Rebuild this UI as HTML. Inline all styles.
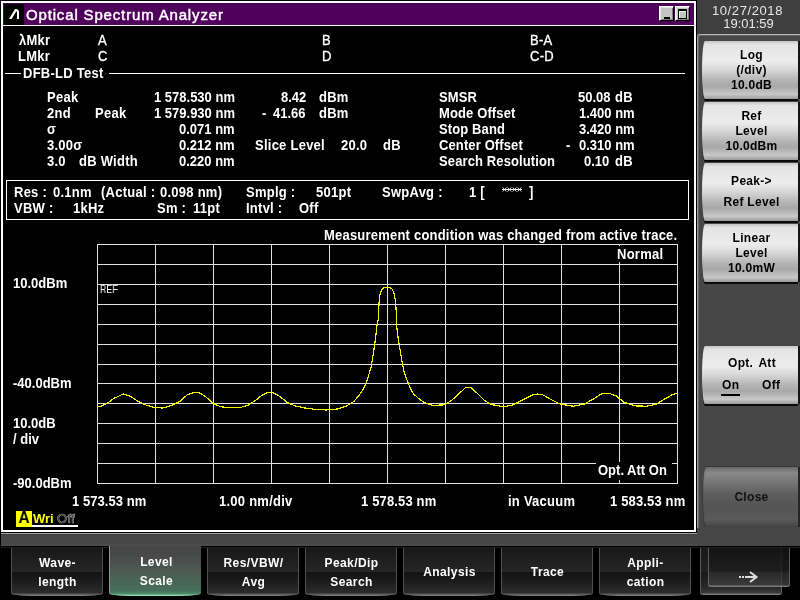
<!DOCTYPE html>
<html><head><meta charset="utf-8">
<style>
*{margin:0;padding:0;box-sizing:border-box}
html,body{width:800px;height:600px;overflow:hidden;background:#000}
body{position:relative;font-family:"Liberation Sans",sans-serif;color:#fff}
.t,.key,.fk,.a{will-change:transform}
.a{position:absolute}
.t{position:absolute;font-weight:bold;font-size:13px;line-height:13px;white-space:pre;color:#fff;transform:scaleY(1.1);transform-origin:0 11px;letter-spacing:0.25px}
.sk{position:absolute;font-weight:bold;font-size:12px;line-height:12px;white-space:pre;color:#000;text-align:center}

.key{position:absolute;left:702px;width:96px;height:58px;box-shadow:0 2px 0 #0a0a0a,2px 0 0 #151515;border-radius:3px 0 0 3px / 29px 0 0 29px;padding-left:3px;background:linear-gradient(to bottom,#c4c4c4 0,#e4e4e4 6%,#ececec 35%,#d6d6d6 50%,#b4b4b4 68%,#a8a8a8 78%,#c8c8c8 92%,#9a9a9a 100%);display:flex;align-items:center;justify-content:center;text-align:center;font-weight:bold;font-size:12px;line-height:15px;color:#000;letter-spacing:0.3px}
.key.k2 span{line-height:21px}
.key.close{box-shadow:inset 1px 0 1px #383838,0 -1px 0 #383838,2px 0 0 #262626;background:linear-gradient(to bottom,#6a6a6a 0,#8a8a8a 10%,#767676 25%,#5e5e5e 45%,#545454 65%,#5a5a5a 88%,#444 100%);color:#111}
.fk{position:absolute;top:548px;width:92px;height:48px;border-radius:0 0 20px 20px / 0 0 3px 3px;background:linear-gradient(to bottom,#181818 0,#262626 50%,#131313 51%,#1c1c1c 70%,#2c2c2c 93%,#8a8a8a 100%);box-shadow:inset 1px 0 0 #505050,inset -1px 0 0 #505050;display:flex;align-items:center;justify-content:center;text-align:center;font-weight:bold;font-size:12px;line-height:19px;color:#fff;letter-spacing:0.4px;padding-left:1px;padding-top:1px}
.fk.act{top:546px;height:50px;background:linear-gradient(to bottom,#474747 0,#474747 15%,#4c5a53 50%,#46705a 90%,#4a8a68 95%,#a0e8c0 100%);box-shadow:inset 1px 0 0 #8a9a90;padding-top:1px;padding-left:3px}
</style></head><body>
<!-- right panel background -->
<div class="a" style="left:697px;top:0;width:103px;height:546px;background:#3f3f3f"></div>
<!-- bottom gray bar -->
<div class="a" style="left:1px;top:533px;width:799px;height:13px;background:linear-gradient(to bottom,#383838 0,#474747 12%,#474747 80%,#4e4e4e 100%);border-top:1px solid #a4a4a4"></div>
<div class="a" style="left:1px;top:547px;width:799px;height:1px;background:#1e1e1e"></div>
<!-- window -->
<div class="a" style="left:1px;top:1px;width:695px;height:531px;border:2px solid #fff;background:#000"></div>
<!-- title bar -->
<div class="a" style="left:3px;top:3px;width:691px;height:22px;background:#4e005a"></div>
<div class="a" style="left:3px;top:25px;width:691px;height:1px;background:#fff"></div>
<div class="a" style="left:4px;top:4px;width:20px;height:21px;background:#000"></div>
<svg class="a" style="left:0;top:0" width="30" height="30"><path d="M9 19 L15 9 L17 9 L19 11 L19 19 L17 19 L17 12 L16.2 11.6 L11.6 19 Z" fill="#fff"/></svg>
<div class="a" style="left:26px;top:6px;font-size:15px;line-height:18px;white-space:pre;color:#fff;letter-spacing:0.84px;-webkit-text-stroke:0.45px #fff">Optical Spectrum Analyzer</div>
<!-- min/max -->
<div class="a" style="left:659px;top:6px;width:15px;height:15px;background:#c4c4c4;border-top:1px solid #fff;border-left:1px solid #fff;border-right:1px solid #000;border-bottom:1px solid #000;box-shadow:inset 1px 1px 0 #e4e4e4,inset -1px -1px 0 #808080"></div>
<div class="a" style="left:664px;top:17px;width:6px;height:2px;background:#000"></div>
<div class="a" style="left:675px;top:6px;width:15px;height:15px;background:#c4c4c4;border-top:1px solid #fff;border-left:1px solid #fff;border-right:1px solid #000;border-bottom:1px solid #000;box-shadow:inset 1px 1px 0 #e4e4e4,inset -1px -1px 0 #808080"></div>
<div class="a" style="left:678px;top:9px;width:9px;height:10px;border:1px solid #000;border-top-width:2px;background:#c4c4c4;box-shadow:inset 1px 1px 0 #f0f0f0"></div>

<!-- marker header -->
<div class="t" style="left:19px;top:34px">λMkr</div>
<div class="t" style="left:98px;top:34px;font-weight:normal;-webkit-text-stroke:0.3px #fff">A</div>
<div class="t" style="left:322px;top:34px;font-weight:normal;-webkit-text-stroke:0.3px #fff">B</div>
<div class="t" style="left:530px;top:34px;font-weight:normal;-webkit-text-stroke:0.3px #fff">B-A</div>
<div class="t" style="left:18px;top:50px">LMkr</div>
<div class="t" style="left:98px;top:50px;font-weight:normal;-webkit-text-stroke:0.3px #fff">C</div>
<div class="t" style="left:322px;top:50px;font-weight:normal;-webkit-text-stroke:0.3px #fff">D</div>
<div class="t" style="left:530px;top:50px;font-weight:normal;-webkit-text-stroke:0.3px #fff">C-D</div>
<div class="a" style="left:5px;top:73px;width:16px;height:1px;background:#fff"></div>
<div class="t" style="left:23px;top:67px">DFB-LD Test</div>
<div class="a" style="left:109px;top:73px;width:576px;height:1px;background:#fff"></div>

<!-- data -->
<div class="t" style="left:47px;top:91px">Peak</div>
<div class="t" style="left:47px;top:107px">2nd</div>
<div class="t" style="left:95px;top:107px">Peak</div>
<div class="t" style="left:47px;top:123px">σ</div>
<div class="t" style="left:47px;top:139px">3.00σ</div>
<div class="t" style="left:47px;top:155px">3.0</div>
<div class="t" style="left:79px;top:155px">dB Width</div>
<div class="t" style="right:565px;top:91px;letter-spacing:0">1 578.530 nm</div>
<div class="t" style="right:565px;top:107px;letter-spacing:0">1 579.930 nm</div>
<div class="t" style="right:565px;top:123px;letter-spacing:0">0.071 nm</div>
<div class="t" style="right:565px;top:139px;letter-spacing:0">0.212 nm</div>
<div class="t" style="right:565px;top:155px;letter-spacing:0">0.220 nm</div>
<div class="t" style="right:494px;top:91px;letter-spacing:0">8.42</div>
<div class="t" style="right:494px;top:107px;letter-spacing:0">41.66</div>
<div class="t" style="left:262px;top:107px">-</div>
<div class="t" style="left:319px;top:91px">dBm</div>
<div class="t" style="left:319px;top:107px">dBm</div>
<div class="t" style="left:255px;top:139px">Slice Level</div>
<div class="t" style="left:341px;top:139px">20.0</div>
<div class="t" style="left:383px;top:139px">dB</div>

<div class="t" style="left:439px;top:91px;letter-spacing:0.12px">SMSR</div>
<div class="t" style="left:439px;top:107px;letter-spacing:0.12px">Mode Offset</div>
<div class="t" style="left:439px;top:123px;letter-spacing:0.12px">Stop Band</div>
<div class="t" style="left:439px;top:139px;letter-spacing:0.12px">Center Offset</div>
<div class="t" style="left:439px;top:155px;letter-spacing:0.12px">Search Resolution</div>
<div class="t" style="right:189px;top:91px;letter-spacing:0">50.08</div>
<div class="t" style="left:615px;top:91px">dB</div>
<div class="t" style="right:165px;top:107px;letter-spacing:0">1.400 nm</div>
<div class="t" style="right:165px;top:123px;letter-spacing:0">3.420 nm</div>
<div class="t" style="left:566px;top:139px">-</div>
<div class="t" style="right:165px;top:139px;letter-spacing:0">0.310 nm</div>
<div class="t" style="right:191px;top:155px;letter-spacing:0">0.10</div>
<div class="t" style="left:615px;top:155px">dB</div>

<!-- res box -->
<div class="a" style="left:6px;top:180px;width:683px;height:40px;border:1px solid #fff"></div>
<div class="t" style="left:14px;top:186px">Res :</div>
<div class="t" style="left:53px;top:186px">0.1nm</div>
<div class="t" style="left:101px;top:186px">(Actual :</div>
<div class="t" style="left:160px;top:186px">0.098 nm)</div>
<div class="t" style="left:246px;top:186px">Smplg :</div>
<div class="t" style="left:316px;top:186px">501pt</div>
<div class="t" style="left:382px;top:186px">SwpAvg :</div>
<div class="t" style="left:469px;top:186px">1 [</div>
<svg class="a" style="left:500px;top:186px" width="26" height="8"><path d="M2.0 3.5H7.0M2.7 1.5L6.3 5.5M6.3 1.5L2.7 5.5M7.0 3.5H12.0M7.7 1.5L11.3 5.5M11.3 1.5L7.7 5.5M12.0 3.5H17.0M12.7 1.5L16.3 5.5M16.3 1.5L12.7 5.5M17.0 3.5H22.0M17.7 1.5L21.3 5.5M21.3 1.5L17.7 5.5" stroke="#fff" stroke-width="0.9" fill="none"/></svg>
<div class="t" style="left:529px;top:186px">]</div>
<div class="t" style="left:14px;top:202px">VBW :</div>
<div class="t" style="left:73px;top:202px">1kHz</div>
<div class="t" style="left:157px;top:202px">Sm :</div>
<div class="t" style="left:193px;top:202px">11pt</div>
<div class="t" style="left:246px;top:202px">Intvl :</div>
<div class="t" style="left:299px;top:202px">Off</div>

<!-- graph -->
<div class="t" style="left:324px;top:229px;letter-spacing:0.21px">Measurement condition was changed from active trace.</div>
<svg class="a" style="left:0;top:0" width="800" height="600" id="g">
<g fill="#e0e0e0" shape-rendering="crispEdges">
<rect x="97" y="244" width="581" height="1"/>
<rect x="97" y="264" width="581" height="1"/>
<rect x="97" y="284" width="581" height="1"/>
<rect x="97" y="304" width="581" height="1"/>
<rect x="97" y="324" width="581" height="1"/>
<rect x="97" y="344" width="581" height="1"/>
<rect x="97" y="364" width="581" height="1"/>
<rect x="97" y="383" width="581" height="1"/>
<rect x="97" y="403" width="581" height="1"/>
<rect x="97" y="423" width="581" height="1"/>
<rect x="97" y="443" width="581" height="1"/>
<rect x="97" y="463" width="581" height="1"/>
<rect x="97" y="483" width="581" height="1"/>
<rect x="97" y="244" width="1" height="240"/>
<rect x="155" y="244" width="1" height="240"/>
<rect x="213" y="244" width="1" height="240"/>
<rect x="271" y="244" width="1" height="240"/>
<rect x="329" y="244" width="1" height="240"/>
<rect x="387" y="244" width="1" height="240"/>
<rect x="445" y="244" width="1" height="240"/>
<rect x="503" y="244" width="1" height="240"/>
<rect x="561" y="244" width="1" height="240"/>
<rect x="619" y="244" width="1" height="240"/>
<rect x="677" y="244" width="1" height="240"/>
</g>
<rect x="612" y="246" width="60" height="16" fill="#000"/>
<rect x="596" y="462" width="76" height="18" fill="#000"/>
<polyline points="97.0,407.2 100.8,406.3 108.2,402.5 113.9,398.4 123.3,394.0 130.8,396.5 137.3,401.0 143.9,404.4 153.3,407.2 162.6,408.1 172.0,405.3 179.5,401.6 187.0,395.0 194.5,392.2 200.0,393.0 205.8,396.9 213.2,403.4 220.8,406.8 230.0,407.8 241.4,407.2 248.1,405.2 254.6,401.1 261.1,395.9 267.6,392.5 272.5,392.5 279.0,395.9 287.2,402.4 295.3,406.0 305.0,408.0 314.8,409.3 326.2,410.0 337.6,409.0 345.7,406.3 353.8,401.5 360.3,393.8 364.8,386.2 368.0,377.5 371.2,366.7 374.0,349.3 375.3,340.0 376.3,331.3 377.2,323.6 378.2,319.7 378.9,306.2 379.4,297.5 380.2,293.6 381.6,290.2 384.5,287.3 389.8,287.3 392.2,289.2 393.7,292.6 394.7,296.5 395.6,301.3 396.1,310.0 396.6,325.5 398.0,337.0 401.0,355.8 403.8,371.0 407.0,380.0 410.5,388.8 413.5,393.8 417.5,397.5 424.5,402.8 433.2,405.4 443.8,404.9 450.8,401.0 457.8,394.9 465.6,387.5 470.9,387.5 477.0,393.1 484.0,400.1 491.0,404.5 503.2,406.6 512.0,405.4 522.5,400.1 533.0,394.9 537.5,394.0 543.1,395.0 550.6,399.3 560.0,404.0 573.1,406.2 584.4,404.0 593.8,398.8 601.2,394.0 608.8,393.1 616.2,396.0 623.8,402.1 635.0,405.9 646.2,406.2 655.6,404.4 665.0,398.8 672.5,394.6 677.2,393.1" fill="none" stroke="#f4f400" stroke-width="1.2" stroke-linejoin="round" shape-rendering="crispEdges"/>
</svg>

<!-- axis labels -->
<div class="t" style="left:13px;top:277px;letter-spacing:0">10.0dBm</div>
<div class="t" style="left:13px;top:377px;letter-spacing:0">-40.0dBm</div>
<div class="t" style="left:13px;top:417px;letter-spacing:0">10.0dB</div>
<div class="t" style="left:13px;top:433px;letter-spacing:0">/ div</div>
<div class="t" style="left:13px;top:477px;letter-spacing:0">-90.0dBm</div>
<div class="t" style="left:72px;top:495px;letter-spacing:0.05px">1 573.53 nm</div>
<div class="t" style="left:219px;top:495px">1.00 nm/div</div>
<div class="t" style="left:361px;top:495px;letter-spacing:0.15px">1 578.53 nm</div>
<div class="t" style="left:508px;top:495px">in Vacuum</div>
<div class="t" style="left:610px;top:495px;letter-spacing:0.15px">1 583.53 nm</div>

<!-- right soft keys -->
<div class="a" style="left:696px;top:4px;width:103px;text-align:center;font-size:13px;line-height:13px;color:#e8e8e8;white-space:pre;letter-spacing:0.6px">10/27/2018</div>
<div class="a" style="left:697px;top:17px;width:103px;text-align:center;font-size:13px;line-height:13px;color:#e8e8e8;white-space:pre">19:01:59</div>


<!-- graph small labels -->
<div class="a" style="left:100px;top:285px;font-size:10px;line-height:10px;color:#fff;white-space:pre;transform:scaleX(0.88);transform-origin:0 0">REF</div>
<div class="t" style="left:617px;top:248px">Normal</div>
<div class="t" style="left:598px;top:464px;letter-spacing:0">Opt. Att On</div>
<div class="a" style="left:16px;top:511px;width:16px;height:16px;background:#ffff00"></div>
<div class="a" style="left:16px;top:510px;width:16px;font-size:16px;line-height:16px;font-weight:bold;color:#000;text-align:center;transform:scaleX(0.95)">A</div>
<div class="a" style="left:33px;top:511px;font-size:13px;line-height:16px;font-weight:bold;color:#ffff00">Wri</div>
<div class="a" style="left:57px;top:511px;font-size:13px;line-height:16px;color:#000;-webkit-text-stroke:0.7px #9a9a9a;letter-spacing:0.3px">Off</div>
<div class="a" style="left:32px;top:525px;width:46px;height:2px;background:#fff"></div>

<!-- right softkey panel -->
<div class="a" style="left:697px;top:34px;width:103px;height:512px;background:#474747;border-top:1px solid #b8b8b8;border-left:1px solid #9a9a9a;border-top-left-radius:3px;box-shadow:inset 1px 1px 0 #646464"></div>
<div class="a" style="left:697px;top:528px;width:103px;height:18px;background:#474747"></div>
<div class="key" style="top:41px"><span>Log<br>(/div)<br>10.0dB</span></div>
<div class="key" style="top:102px"><span>Ref<br>Level<br>10.0dBm</span></div>
<div class="key k2" style="top:163px"><span>Peak-&gt;<br>Ref Level</span></div>
<div class="key" style="top:224px"><span>Linear<br>Level<br>10.0mW</span></div>
<div class="key" style="top:346px"></div>
<div class="a" style="left:728px;top:357px;font-weight:bold;font-size:12px;line-height:12px;color:#000;letter-spacing:0.3px;word-spacing:2px;white-space:pre">Opt. Att</div>
<div class="a" style="left:722px;top:379px;font-weight:bold;font-size:12px;line-height:12px;color:#000;letter-spacing:0.3px">On</div>
<div class="a" style="left:762px;top:379px;font-weight:bold;font-size:12px;line-height:12px;color:#000;letter-spacing:0.3px">Off</div>
<div class="a" style="left:721px;top:394px;width:19px;height:2px;background:#000"></div>
<div class="key close" style="top:467px;height:60px"><span>Close</span></div>

<!-- bottom function keys -->
<div class="fk" style="left:11px"><span>Wave-<br>length</span></div>
<div class="fk act" style="left:109px"><span>Level<br>Scale</span></div>
<div class="fk" style="left:207px"><span>Res/VBW/<br>Avg</span></div>
<div class="fk" style="left:305px"><span>Peak/Dip<br>Search</span></div>
<div class="fk" style="left:403px"><span>Analysis</span></div>
<div class="fk" style="left:501px"><span>Trace</span></div>
<div class="fk" style="left:599px"><span>Appli-<br>cation</span></div>
<div class="a" style="left:700px;top:548px;width:82px;height:47px;border-radius:0 0 3px 3px;background:linear-gradient(to bottom,#181818 0,#222 50%,#181818 51%,#2a2a2a 85%,#3a3a3a 95%,#8a8a8a 100%);box-shadow:inset 1px 0 0 #5a5a5a,inset -1px 0 0 #5a5a5a"></div>
<div class="a" style="left:708px;top:548px;width:82px;height:39px;border-radius:0 0 3px 3px;background:linear-gradient(to bottom,rgba(20,20,20,.85) 0,rgba(30,30,30,.85) 60%,rgba(44,44,44,.8) 61%,rgba(64,64,64,.8) 94%,rgba(150,150,150,.9) 100%);box-shadow:inset 1px 0 0 rgba(120,120,120,.7),inset -1px 0 0 rgba(120,120,120,.7)"></div>
<svg class="a" style="left:736px;top:568px" width="24" height="16"><rect x="3" y="8" width="2" height="2" fill="#ddd"/><rect x="6" y="8" width="2" height="2" fill="#ddd"/><rect x="9" y="8" width="10" height="2" fill="#ddd"/><path d="M14 4 L20.5 9 L14 14" fill="none" stroke="#ddd" stroke-width="2"/></svg>
</body></html>
